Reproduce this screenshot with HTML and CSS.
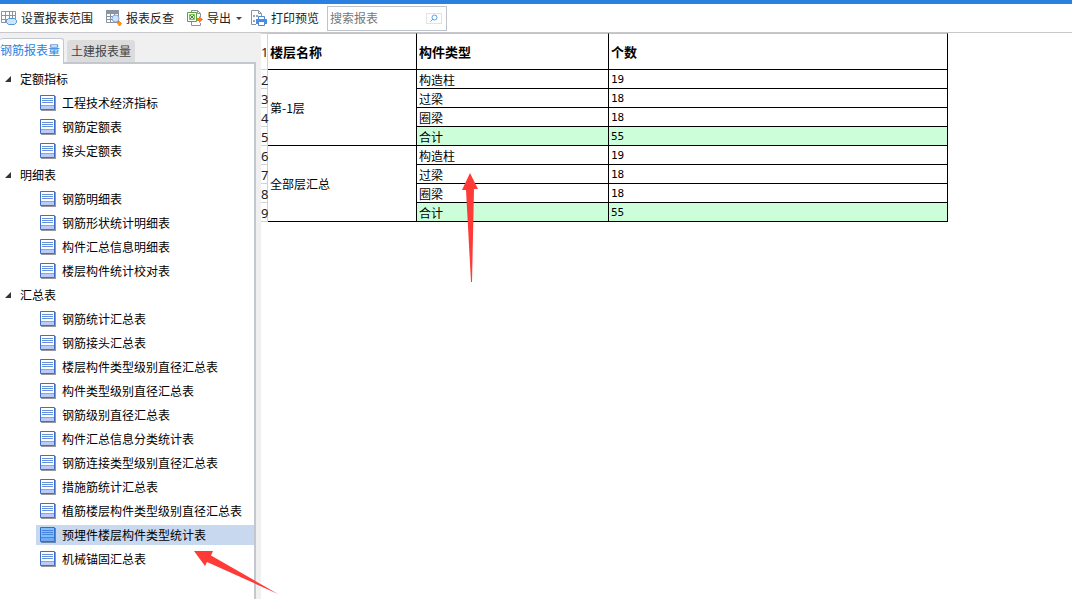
FILE: index.html
```html
<!DOCTYPE html>
<html lang="zh-CN">
<head>
<meta charset="utf-8">
<title>报表预览</title>
<link rel="stylesheet" href="styles.css">
</head>
<body>
<svg class="defs" aria-hidden="true">
  <symbol id="sheet" viewBox="0 0 16 16">
    <path d="M1 1h15v15H1z" fill="#9a9a9a"/>
    <path d="M.5.5h14v14H.5z" fill="#fff" stroke="#3f6cc4"/>
    <path d="M1 10h13v4H1z" fill="#b9caff"/>
    <path d="M2 3.500h11M2 5.500h11M2 7.500h11" stroke="#6790dc"/>
    <path d="M1 10.500h13" stroke="#86a4ea"/>
  </symbol>
  <symbol id="sheet-active" viewBox="0 0 16 16">
    <path d="M1 1h15v15H1z" fill="#6d86a8"/>
    <path d="M.5.5h14v14H.5z" fill="#84bdfb" stroke="#2f70cc"/>
    <path d="M1 10h13v4H1z" fill="#6eabf3"/>
    <path d="M2 3.500h11M2 5.500h11M2 7.500h11M1 10.500h13" stroke="#4786dc"/>
  </symbol>
</svg>
<div class="app">
  <header class="toolbar">
    <button class="tool tool-range" type="button">
      <svg class="icon" viewBox="0 0 16 16" fill="none">
        <path d="M.5 1.5h14v11H.5zM.5 5.5h14M.5 9.5h14M4.5 1v11M8.5 1v11M11.5 1v8" stroke="#8995a0"/>
        <path d="M7.500 8.500h6l2 2v2l-2 2h-6l-2-2v-2z" fill="#c9e5fb" stroke="#5b93cf"/>
      </svg>
      <span>设置报表范围</span>
    </button>
    <button class="tool tool-check" type="button">
      <svg class="icon" viewBox="0 0 16 16" fill="none">
        <path d="M0 0h13v4H0z" fill="#8995a0"/>
        <path d="M.5.5h12v12H.5zM.5 6.500h12M.5 9.500h12M4.500 1v11M8.500 1v11" stroke="#8995a0"/>
        <circle cx="9.500" cy="8.500" r="3.500" fill="#cfe3ff" stroke="#7fa3de"/>
        <path d="M12 11l1 1" stroke="#8995a0" stroke-width="2"/>
        <path d="M13.500 11.500l2 2-2 2.500-2-2.500z" fill="#ff9515" stroke="#f58a10"/>
      </svg>
      <span>报表反查</span>
    </button>
    <button class="tool tool-export" type="button">
      <svg class="icon" viewBox="0 0 16 16" fill="none">
        <path d="M4.500 3V.5h6l3 3V7M13.500 13v2.500h-9V12" stroke="#8995a0"/>
        <path d="M10.500.5v3h3" stroke="#8995a0"/>
        <path d="M.5 2.500h9v9h-9z" fill="#fff" stroke="#58a33c"/>
        <path d="M2.500 4.500h5v5h-5z" fill="#d9efcf" stroke="#7dbb66"/>
        <path d="M3 5l4 4M7 5L3 9" stroke="#3f912d"/>
        <path d="M10 8h2V6l4 3.500-4 3.500v-2h-2z" fill="#f47b20"/>
      </svg>
      <span>导出</span>
      <svg class="caret" viewBox="0 0 6 3"><path d="M0 0h6L3 3z" fill="#444"/></svg>
    </button>
    <button class="tool tool-print" type="button">
      <svg class="icon" viewBox="0 0 16 16" fill="none">
        <path d="M5 14.500H.5V.5h7l3 3V6M7.500.5v3h3" stroke="#8995a0"/>
        <path d="M2 5h2v2H2zM5 5h2v2H5zM2 10h2v2H2z" fill="#9aa5af"/>
        <path d="M7.500 6.500h6v3h-6z" fill="#fff" stroke="#4b87d4"/>
        <path d="M5 9h11v5H5z" fill="#4b8ee0"/>
        <path d="M7.500 11.500h6v4h-6z" fill="#fff" stroke="#4b87d4"/>
      </svg>
      <span>打印预览</span>
    </button>
    <form class="search">
      <input class="search-input" type="text" placeholder="搜索报表" aria-label="搜索报表">
      <button class="search-button" type="button" aria-label="搜索">
        <svg viewBox="0 0 8 8" fill="none" stroke="#5ba2dd"><circle cx="4.500" cy="3.500" r="2.500"/><path d="M3 5L.5 7.500"/></svg>
      </button>
    </form>
  </header>
  <div class="body">
    <aside class="sidebar">
      <div class="tabs" role="tablist">
        <button class="tab tab-active" type="button" role="tab" aria-selected="true">钢筋报表量</button>
        <button class="tab" type="button" role="tab" aria-selected="false">土建报表量</button>
      </div>
      <nav class="tree">
        <section>
          <button class="group" type="button"><svg class="arrow" viewBox="0 0 6 6"><path d="M6 0v6H0z" fill="#333"/></svg>定额指标</button>
          <ul class="items">
            <li><a class="item" href="#"><svg class="icon"><use href="#sheet"/></svg>工程技术经济指标</a></li>
            <li><a class="item" href="#"><svg class="icon"><use href="#sheet"/></svg>钢筋定额表</a></li>
            <li><a class="item" href="#"><svg class="icon"><use href="#sheet"/></svg>接头定额表</a></li>
          </ul>
        </section>
        <section>
          <button class="group" type="button"><svg class="arrow" viewBox="0 0 6 6"><path d="M6 0v6H0z" fill="#333"/></svg>明细表</button>
          <ul class="items">
            <li><a class="item" href="#"><svg class="icon"><use href="#sheet"/></svg>钢筋明细表</a></li>
            <li><a class="item" href="#"><svg class="icon"><use href="#sheet"/></svg>钢筋形状统计明细表</a></li>
            <li><a class="item" href="#"><svg class="icon"><use href="#sheet"/></svg>构件汇总信息明细表</a></li>
            <li><a class="item" href="#"><svg class="icon"><use href="#sheet"/></svg>楼层构件统计校对表</a></li>
          </ul>
        </section>
        <section>
          <button class="group" type="button"><svg class="arrow" viewBox="0 0 6 6"><path d="M6 0v6H0z" fill="#333"/></svg>汇总表</button>
          <ul class="items">
            <li><a class="item" href="#"><svg class="icon"><use href="#sheet"/></svg>钢筋统计汇总表</a></li>
            <li><a class="item" href="#"><svg class="icon"><use href="#sheet"/></svg>钢筋接头汇总表</a></li>
            <li><a class="item" href="#"><svg class="icon"><use href="#sheet"/></svg>楼层构件类型级别直径汇总表</a></li>
            <li><a class="item" href="#"><svg class="icon"><use href="#sheet"/></svg>构件类型级别直径汇总表</a></li>
            <li><a class="item" href="#"><svg class="icon"><use href="#sheet"/></svg>钢筋级别直径汇总表</a></li>
            <li><a class="item" href="#"><svg class="icon"><use href="#sheet"/></svg>构件汇总信息分类统计表</a></li>
            <li><a class="item" href="#"><svg class="icon"><use href="#sheet"/></svg>钢筋连接类型级别直径汇总表</a></li>
            <li><a class="item" href="#"><svg class="icon"><use href="#sheet"/></svg>措施筋统计汇总表</a></li>
            <li><a class="item" href="#"><svg class="icon"><use href="#sheet"/></svg>植筋楼层构件类型级别直径汇总表</a></li>
            <li><a class="item item-active" href="#" aria-current="page"><svg class="icon"><use href="#sheet-active"/></svg>预埋件楼层构件类型统计表</a></li>
            <li><a class="item" href="#"><svg class="icon"><use href="#sheet"/></svg>机械锚固汇总表</a></li>
          </ul>
        </section>
      </nav>
    </aside>
    <main class="report">
      <table class="grid">
        <colgroup><col class="col-index"><col class="col-floor"><col class="col-type"><col class="col-count"></colgroup>
        <thead>
          <tr><th class="index">1</th><th>楼层名称</th><th>构件类型</th><th>个数</th></tr>
        </thead>
        <tbody>
          <tr><th class="index">2</th><td class="floor" rowspan="4">第-1层</td><td>构造柱</td><td class="num">19</td></tr>
          <tr><th class="index">3</th><td>过梁</td><td class="num">18</td></tr>
          <tr><th class="index">4</th><td>圈梁</td><td class="num">18</td></tr>
          <tr><th class="index">5</th><td class="total">合计</td><td class="num total">55</td></tr>
          <tr><th class="index">6</th><td class="floor" rowspan="4">全部层汇总</td><td>构造柱</td><td class="num">19</td></tr>
          <tr><th class="index">7</th><td>过梁</td><td class="num">18</td></tr>
          <tr><th class="index">8</th><td>圈梁</td><td class="num">18</td></tr>
          <tr><th class="index">9</th><td class="total">合计</td><td class="num total">55</td></tr>
        </tbody>
      </table>
    </main>
  </div>
  <svg class="pointer pointer-table" viewBox="0 0 18 110" aria-hidden="true"><path d="M9 0l8 16-4 0L11 109H10L5 17H1z" fill="#ff3b38"/></svg>
  <svg class="pointer pointer-item" viewBox="0 0 86 44" aria-hidden="true"><path d="M0 0h19l-2 4.500L84 43 13 11l-2 4z" fill="#ff3b38"/></svg>
</div>
</body>
</html>
```
FILE: styles.css
```css
* { box-sizing: border-box; }

body {
  margin: 0;
  background: #fff;
  color: #000;
  font: 12px/16px "Noto Sans CJK SC", sans-serif;
}

button, input {
  margin: 0;
  padding: 0;
  border: 0;
  background: none;
  color: inherit;
  font: inherit;
}

.defs { position: absolute; width: 0; height: 0; }

.app {
  position: relative;
  display: flex;
  flex-direction: column;
  min-height: 100vh;
  overflow: hidden;
}

.icon { width: 16px; height: 16px; flex: none; }

/* Toolbar */
.toolbar {
  display: flex;
  align-items: center;
  height: 33px;
  padding-left: 1px;
  border-top: 4px solid #2b80e0;
  border-bottom: 1px solid #c8c8cc;
  color: #222;
}

.tool {
  display: flex;
  align-items: center;
  gap: 4px;
  margin-right: 13px;
  white-space: nowrap;
}

.tool-export { margin-right: 9px; }
.tool-print { margin-right: 8px; }
.caret { width: 6px; height: 3px; margin-left: 1px; }

.search {
  display: flex;
  align-items: center;
  width: 120px;
  height: 25px;
  padding: 0 4px 0 2px;
  border: 1px solid #bfc3cb;
}

.search-input { flex: 1; min-width: 0; outline: 0; }
.search-input::placeholder { color: #777; opacity: 1; }

.search-button {
  display: flex;
  align-items: center;
  justify-content: center;
  width: 16px;
  height: 11px;
  border: 1px solid #e3e3e3;
}

.search-button svg { width: 8px; height: 8px; }

/* Sidebar */
.body { display: flex; flex: 1; }

.sidebar {
  display: flex;
  flex-direction: column;
  flex: none;
  width: 261px;
  padding-right: 5px;
  background: #f0f0f0;
}

.tabs { display: flex; align-items: flex-end; gap: 3px; height: 29px; }

.tab {
  height: 22px;
  padding: 0 4px;
  border-radius: 3px 3px 0 0;
  background: #dcdcdc;
  color: #444;
}

.tab-active {
  z-index: 1;
  height: 26px;
  margin-bottom: -2px;
  padding: 0 3px 3px 0;
  border: 1px solid #c3c7ce;
  border-width: 1px 1px 0 0;
  background: #fff;
  color: #2b82e0;
}

.tree {
  flex: 1;
  padding-top: 3px;
  border: 2px solid #c3c7ce;
  border-width: 2px 2px 0 0;
  background: #fff;
}

.group {
  display: flex;
  align-items: center;
  gap: 9px;
  width: 100%;
  height: 24px;
  padding-left: 5px;
}

.arrow { width: 6px; height: 6px; }

.items { margin: 0; padding: 0 0 0 36px; list-style: none; }
.items li { display: flex; align-items: center; height: 24px; }

.item {
  display: flex;
  align-items: center;
  gap: 6px;
  width: 100%;
  height: 20px;
  padding-left: 4px;
  color: inherit;
  text-decoration: none;
  white-space: nowrap;
}

.item-active { background: #c8d9ef; }

/* Report grid */
.report { flex: 1; min-width: 0; }

.grid {
  width: 687px;
  table-layout: fixed;
  border-collapse: separate;
  border-spacing: 0;
}

.col-index { width: 7px; }
.col-floor { width: 149px; }
.col-type { width: 192px; }
.col-count { width: 339px; }

.grid th, .grid td {
  height: 19px;
  padding: 2px 0 0 2px;
  border: 1px solid #000;
  border-width: 0 1px 1px 0;
  line-height: 16px;
  text-align: left;
}

.grid thead th {
  height: 37px;
  padding-top: 0;
  border-top: 1px solid #c3c3c3;
  font-size: 13px;
}

.grid .floor { padding-top: 0; }

.grid .index {
  padding: 1px 0 0;
  border-color: #d0d2d6;
  font: 13px/16px "Noto Sans", sans-serif;
  color: #222;
}

.grid .num { font-family: "DejaVu Sans Mono", monospace; font-size: 11px; }
.grid .total { background: #ccffd9; }

/* Callout arrows drawn over the page */
.pointer { position: absolute; pointer-events: none; }
.pointer-table { left: 461px; top: 173px; width: 18px; height: 110px; }
.pointer-item { left: 194px; top: 551px; width: 86px; height: 44px; }
```
